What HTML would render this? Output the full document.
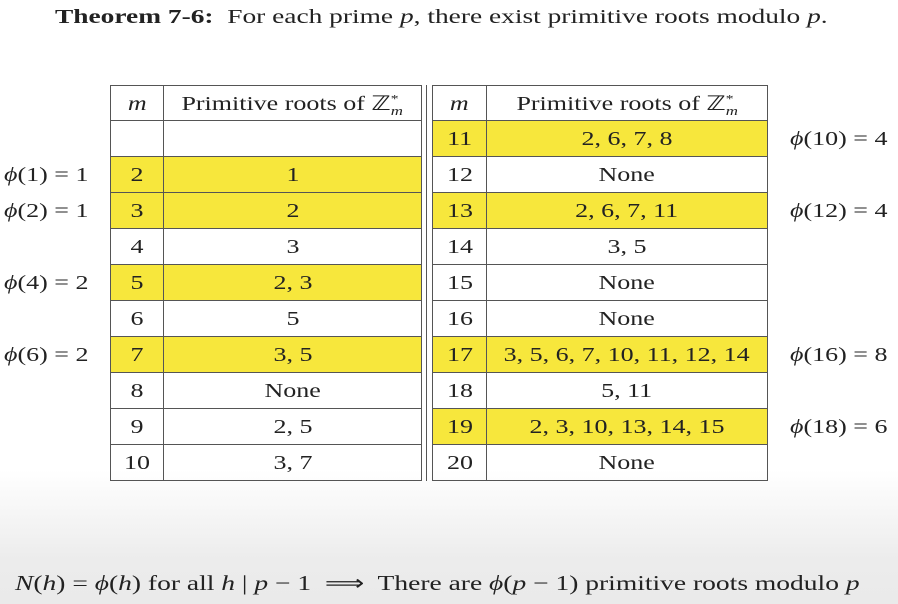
<!DOCTYPE html>
<html><head><style>
body{margin:0;width:898px;height:604px;overflow:hidden;font-family:"Liberation Serif",serif;color:#222;
background:linear-gradient(#fff 0,#fff 470px,#ececec 560px,#eaeaea 604px);position:relative}
.a{position:absolute;white-space:nowrap;transform-origin:0 50%}
.c{position:absolute;box-sizing:border-box;text-align:center;font-size:20px;line-height:36px;height:36px;border-right:1px solid #555;border-bottom:1px solid #555}
.c span{display:inline-block;transform:scaleX(1.3)}
.y{background:#f7e73c}
i{font-style:italic}
.l{font-size:20px;line-height:36px;transform:scaleX(1.3)}
sup,sub{line-height:0}
</style></head><body>
<div class="a" style="left:55px;top:6px;font-size:20px;transform:scaleX(1.37)"><b>Theorem 7-6:</b>&nbsp; For each prime <i>p</i>, there exist primitive roots modulo <i>p</i>.</div>
<div id="t"></div>
<div class="a" style="left:15px;top:571px;font-size:21px;transform:scaleX(1.31)"><i>N</i>(<i>h</i>) = <i>ϕ</i>(<i>h</i>) for all <i>h</i> | <i>p</i> − 1 &nbsp;⟹&nbsp; There are <i>ϕ</i>(<i>p</i> − 1) primitive roots modulo <i>p</i></div>
<script>
var L=[["",""],["2","1"],["3","2"],["4","3"],["5","2, 3"],["6","5"],["7","3, 5"],["8","None"],["9","2, 5"],["10","3, 7"]];
var R=[["11","2, 6, 7, 8"],["12","None"],["13","2, 6, 7, 11"],["14","3, 5"],["15","None"],["16","None"],["17","3, 5, 6, 7, 10, 11, 12, 14"],["18","5, 11"],["19","2, 3, 10, 13, 14, 15"],["20","None"]];
var LY=[1,2,4,6],RY=[0,2,6,8];
var LP={1:"<i>ϕ</i>(1) = 1",2:"<i>ϕ</i>(2) = 1",4:"<i>ϕ</i>(4) = 2",6:"<i>ϕ</i>(6) = 2"};
var RP={0:"<i>ϕ</i>(10) = 4",2:"<i>ϕ</i>(12) = 4",6:"<i>ϕ</i>(16) = 8",8:"<i>ϕ</i>(18) = 6"};
var h="";
function cell(x,y,w,t,cls,st){h+='<div class="c '+cls+'" style="left:'+x+'px;top:'+y+'px;width:'+w+'px;'+(st||'')+'"><span>'+t+'</span></div>';}
var hdr='Primitive roots of ℤ<sup style="font-size:12px">*</sup><sub style="font-size:13px;font-style:italic;margin-left:-6px">m</sub>';
cell(110,85,54,'<i>m</i>','','border-left:1px solid #555;border-top:1px solid #555');
cell(164,85,258,hdr,'','border-top:1px solid #555');
cell(432,85,55,'<i>m</i>','','border-left:1px solid #555;border-top:1px solid #555');
cell(487,85,281,hdr,'','border-top:1px solid #555');
for(var i=0;i<10;i++){var y=121+36*i;
var ly=LY.indexOf(i)>=0?'y':'',ry=RY.indexOf(i)>=0?'y':'';
cell(110,y,54,L[i][0],ly,'border-left:1px solid #555');cell(164,y,258,L[i][1],ly);
cell(432,y,55,R[i][0],ry,'border-left:1px solid #555');cell(487,y,281,R[i][1],ry);
if(LP[i])h+='<div class="a l" style="left:4px;top:'+y+'px">'+LP[i]+'</div>';
if(RP[i])h+='<div class="a l" style="left:790px;top:'+y+'px">'+RP[i]+'</div>';}
h+='<div class="a" style="left:426px;top:85px;width:1px;height:396px;background:#555"></div>';
document.getElementById('t').innerHTML=h;
</script>
</body></html>
